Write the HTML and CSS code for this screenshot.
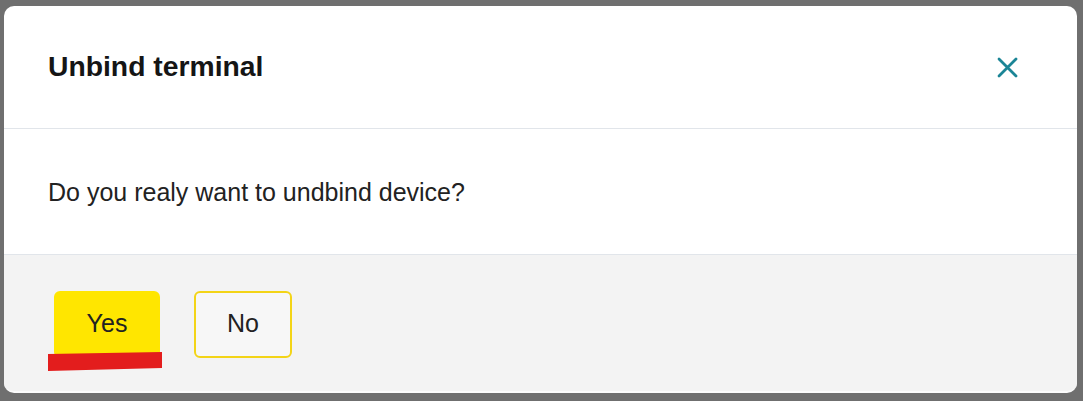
FILE: index.html
```html
<!DOCTYPE html>
<html>
<head>
<meta charset="utf-8">
<link rel="stylesheet" href="styles.css">
</head>
<body>
<div class="dialog">
  <div class="header">
    <h2 class="title">Unbind terminal</h2>
    <button class="close" aria-label="Close">
      <svg width="21" height="21" viewBox="0 0 21 21"><path d="M2 2L19 19M19 2L2 19" stroke="#1b8596" stroke-width="2.8" stroke-linecap="round" fill="none"/></svg>
    </button>
  </div>
  <div class="body">
    <p class="message">Do you realy want to undbind device?</p>
  </div>
  <div class="footer">
    <div class="btn-wrap">
      <button class="btn btn-yes">Yes</button>
      <svg class="mark" width="118" height="22" viewBox="0 0 118 22"><polygon points="1,3 115,1 115,17 1,20" fill="#e31d1d"/></svg>
    </div>
    <button class="btn btn-no">No</button>
  </div>
</div>
</body>
</html>
```

FILE: styles.css
```css
html, body {
  margin: 0;
  padding: 0;
}
body {
  background: #6f6f6f;
  width: 1083px;
  height: 401px;
  box-sizing: border-box;
  padding: 6px 6px 8px 4px;
  font-family: "Liberation Sans", Arial, sans-serif;
  color: #1e1e1e;
}
.dialog {
  background: #ffffff;
  height: 387px;
  border-radius: 10px;
  overflow: hidden;
  display: flex;
  flex-direction: column;
  border-bottom: 2px solid #fbfbfb;
  box-sizing: border-box;
}
.header {
  height: 123px;
  box-sizing: border-box;
  border-bottom: 1px solid #e1e5ea;
  display: flex;
  align-items: center;
  justify-content: space-between;
  padding: 0 59px 0 44px;
}
.title {
  margin: 0;
  font-size: 28.3px;
  font-weight: bold;
  line-height: 1;
  color: #151515;
  padding-bottom: 1px;
}
.close {
  background: none;
  border: none;
  padding: 0;
  width: 21px;
  height: 21px;
  display: flex;
  cursor: pointer;
}
.body {
  height: 126px;
  box-sizing: border-box;
  border-bottom: 1px solid #e1e5ea;
  display: flex;
  align-items: center;
  padding: 0 44px;
}
.message {
  margin: 0;
  font-size: 25px;
  line-height: 1;
  color: #222;
  padding-top: 1px;
}
.footer {
  flex: 1;
  background: #f3f3f3;
  display: flex;
  align-items: flex-start;
  gap: 34px;
  padding: 36px 0 0 50px;
}
.btn-wrap {
  position: relative;
  display: flex;
}
.btn {
  font-family: "Liberation Sans", Arial, sans-serif;
  font-size: 25px;
  height: 67px;
  border-radius: 6px;
  padding: 0 30px 3px;
  color: #222;
  cursor: pointer;
  box-sizing: border-box;
}
.btn-yes {
  background: #ffe600;
  border: 2px solid #ffe600;
  width: 106px;
}
.btn-no {
  background: #f7f7f7;
  border: 2px solid #f3d417;
  width: 98px;
}
.mark {
  position: absolute;
  left: -7px;
  top: 60px;
}
```
